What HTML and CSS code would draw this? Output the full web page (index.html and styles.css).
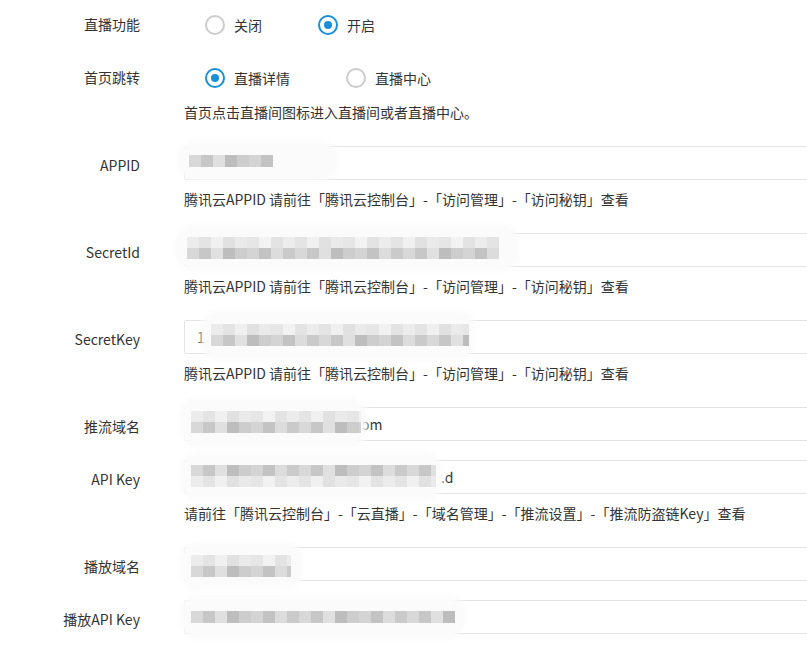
FILE: index.html
```html
<!DOCTYPE html>
<html lang="zh-CN">
<head>
<meta charset="utf-8">
<title>直播设置</title>
<link rel="stylesheet" href="styles.css">
</head>
<body>
<form class="form">
  <div class="group">
    <div class="label label-radio">直播功能</div>
    <div class="radios">
      <label class="radio"><span class="dot"></span>关闭</label>
      <label class="radio on"><span class="dot"></span>开启</label>
    </div>
  </div>

  <div class="group with-help">
    <div class="label label-radio">首页跳转</div>
    <div class="radios">
      <label class="radio on"><span class="dot"></span>直播详情</label>
      <label class="radio"><span class="dot"></span>直播中心</label>
    </div>
    <div class="help help-radio">首页点击直播间图标进入直播间或者直播中心。</div>
  </div>

  <div class="group with-help">
    <div class="label">APPID</div>
    <div class="input">
      <div class="blob b-appid"><div class="px row1 w84"></div></div>
    </div>
    <div class="help">腾讯云APPID 请前往「腾讯云控制台」-「访问管理」-「访问秘钥」查看</div>
  </div>

  <div class="group with-help">
    <div class="label">SecretId</div>
    <div class="input">
      <div class="blob b-sid"><div class="px light w312"></div><div class="px w312"></div></div>
    </div>
    <div class="help">腾讯云APPID 请前往「腾讯云控制台」-「访问管理」-「访问秘钥」查看</div>
  </div>

  <div class="group with-help">
    <div class="label">SecretKey</div>
    <div class="input"><span class="val">1</span>
      <div class="blob b-skey"><div class="px light w258"></div><div class="px w258"></div></div>
    </div>
    <div class="help">腾讯云APPID 请前往「腾讯云控制台」-「访问管理」-「访问秘钥」查看</div>
  </div>

  <div class="group">
    <div class="label">推流域名</div>
    <div class="input"><span class="val v-om">om</span>
      <div class="blob b-push"><div class="px light w170"></div><div class="px w170"></div></div>
    </div>
  </div>

  <div class="group with-help">
    <div class="label">API Key</div>
    <div class="input"><span class="val v-d">.d</span>
      <div class="blob b-api"><div class="px w245"></div><div class="px light w245"></div></div>
    </div>
    <div class="help">请前往「腾讯云控制台」-「云直播」-「域名管理」-「推流设置」-「推流防盗链Key」查看</div>
  </div>

  <div class="group">
    <div class="label">播放域名</div>
    <div class="input">
      <div class="blob b-play"><div class="px light w100"></div><div class="px w100"></div></div>
    </div>
  </div>

  <div class="group">
    <div class="label">播放API Key</div>
    <div class="input">
      <div class="blob b-papi"><div class="px row1 w264"></div></div>
    </div>
  </div>
</form>
</body>
</html>
```

FILE: styles.css
```css
html, body {
  margin: 0;
  padding: 0;
  background: #ffffff;
  overflow: hidden;
}

body {
  font-family: "Noto Sans CJK SC", "Microsoft YaHei", sans-serif;
  font-size: 14px;
  color: #333333;
  line-height: 20px;
}

.form {
  padding-top: 8px;
  width: 830px;
}

.group {
  display: grid;
  grid-template-columns: 140px 1fr;
  column-gap: 44px;
  margin-bottom: 19px;
}

.group.with-help {
  margin-bottom: 24px;
}

.label {
  text-align: right;
  display: flex;
  align-items: center;
  justify-content: flex-end;
  height: 34px;
  padding-top: 3px;
  box-sizing: border-box;
}

.label.label-radio {
  padding-top: 0;
  padding-bottom: 2px;
}

.radios {
  display: flex;
  align-items: center;
  height: 34px;
  padding-left: 21px;
  gap: 56px;
}

.radio {
  display: flex;
  align-items: center;
  gap: 9px;
  cursor: pointer;
}

.dot {
  width: 20px;
  height: 20px;
  box-sizing: border-box;
  border: 2px solid #cccccc;
  border-radius: 50%;
  background: #fff;
  position: relative;
}

.radio.on .dot {
  border-color: #1a8fd8;
}

.radio.on .dot::after {
  content: "";
  position: absolute;
  left: 4px;
  top: 4px;
  width: 8px;
  height: 8px;
  border-radius: 50%;
  background: #1a8fd8;
}

.help {
  grid-column: 2;
  margin-top: 9px;
  line-height: 20px;
}

.help-radio {
  margin-top: 7px;
}

.input {
  position: relative;
  height: 34px;
  box-sizing: border-box;
  border: 1px solid #e3e3e3;
  border-radius: 2px;
  display: flex;
  align-items: center;
  padding-left: 12px;
  color: #333;
}

.val {
  position: relative;
}

.v-om {
  margin-left: 164px;
}

.v-d {
  margin-left: 244px;
}

.blob {
  position: absolute;
  background: #fbfbfb;
  border-radius: 14px;
  box-shadow: 0 0 6px 4px #fbfbfb;
  display: flex;
  flex-direction: column;
  justify-content: center;
  padding: 0 8px;
  box-sizing: border-box;
}

.px {
  height: 11px;
  background: repeating-linear-gradient(90deg,
    #d8d8d8 0 12px, #c7c7c7 12px 24px, #e0e0e0 24px 36px, #bdbdbd 36px 48px,
    #cdcdcd 48px 60px, #d4d4d4 60px 72px, #c3c3c3 72px 84px, #dcdcdc 84px 96px,
    #cacaca 96px 108px);
}

.px.light {
  background: repeating-linear-gradient(90deg,
    #ececec 0 12px, #e4e4e4 12px 24px, #f0f0f0 24px 36px, #e1e1e1 36px 48px,
    #eaeaea 48px 60px, #e6e6e6 60px 72px, #f2f2f2 72px 84px, #e3e3e3 84px 96px);
}

.px.row1 {
  height: 12px;
}

.w84 { width: 84px; }
.w100 { width: 100px; }
.w170 { width: 170px; }
.w245 { width: 245px; }
.w258 { width: 258px; }
.w264 { width: 264px; }
.w312 { width: 312px; }

.b-appid { left: -4px; top: -3px; width: 152px; height: 33px; }
.b-sid { left: -6px; top: -5px; width: 336px; height: 38px; }
.b-skey { left: 20px; top: -7px; width: 266px; height: 42px; padding-left: 6px; }
.b-push { left: -2px; top: -7px; width: 180px; height: 42px; }
.b-api { left: -2px; top: -5px; width: 256px; height: 40px; }
.b-play { left: -2px; top: -2px; width: 116px; height: 40px; }
.b-papi { left: -2px; top: -2px; width: 278px; height: 36px; }
```
